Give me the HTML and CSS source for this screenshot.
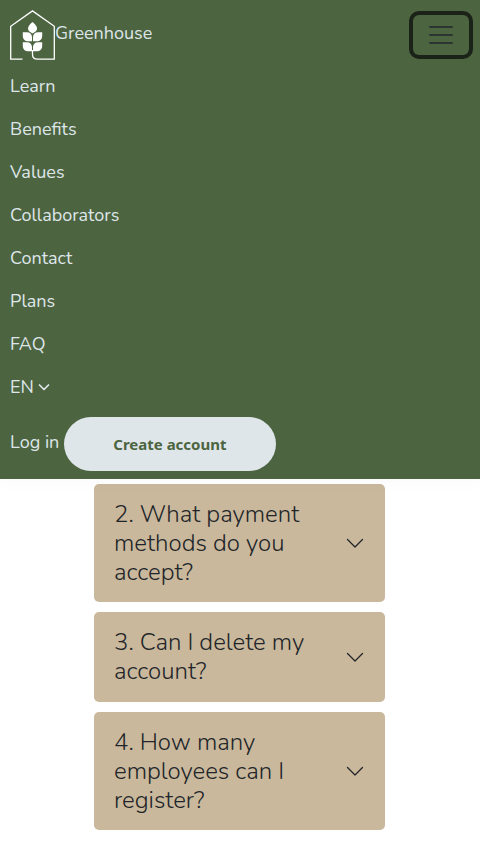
FILE: index.html
```html
<!DOCTYPE html>
<html lang="en">
<head>
  <meta charset="utf-8">
  <meta name="viewport" content="width=device-width, initial-scale=1">
  <title>Greenhouse</title>
  <link rel="stylesheet" href="styles.css">
</head>
<body>
  <header class="navbar">
    <div class="navbar-top">
      <a class="brand" href="#">
        <svg class="logo" viewBox="0 0 45 50" aria-hidden="true">
          <path class="logo-line" d="M12.500 49.200H.7V16.300L22.500.9l21.800 15.400v32.900H27.500c-3 0-5-2-5-5V40"/>
          <path class="logo-leaf" d="M22.500 12c3 2.500 4.500 4.500 4.500 6.500s-1.500 3.500-4.500 5c-3-1.500-4.500-3-4.500-5s1.500-4 4.500-6.500z"/>
          <path class="logo-leaf" d="M12.800 22.200h4c3.500 0 5.200 2 5.200 5v4h-3.500c-3.700 0-5.700-2-5.700-5.500zM32.200 22.200h-4c-3.500 0-5.200 2-5.200 5v4h3.500c3.700 0 5.700-2 5.700-5.500z"/>
          <path class="logo-leaf" d="M12.800 32.200h4c3.500 0 5.200 2 5.200 5v4h-3.500c-3.700 0-5.700-2-5.700-5.500zM32.200 32.200h-4c-3.500 0-5.200 2-5.200 5v4h3.500c3.700 0 5.700-2 5.700-5.500z"/>
        </svg>
        <span>Greenhouse</span>
      </a>
      <button class="toggler" type="button" aria-label="Toggle navigation" aria-expanded="true">
        <svg viewBox="0 0 30 30" aria-hidden="true"><path d="M4 7h22M4 15h22M4 23h22"/></svg>
      </button>
    </div>
    <nav class="menu">
      <a href="#">Learn</a>
      <a href="#">Benefits</a>
      <a href="#">Values</a>
      <a href="#">Collaborators</a>
      <a href="#">Contact</a>
      <a href="#">Plans</a>
      <a href="#">FAQ</a>
      <button class="language" type="button">EN
        <svg viewBox="0 0 12 10" aria-hidden="true"><path d="m1.500 2 4.500 4.500L10.500 2"/></svg>
      </button>
    </nav>
    <div class="account">
      <a class="login" href="#">Log in</a>
      <a class="signup" href="#">Create account</a>
    </div>
  </header>
  <main class="faq">
    <h2><button class="question" type="button"><span>2. What payment methods do you accept?</span>
      <svg viewBox="0 0 20 20" aria-hidden="true"><path d="m2.500 6.500 7.500 7.500 7.500-7.500"/></svg></button></h2>
    <h2><button class="question" type="button"><span>3. Can I delete my account?</span>
      <svg viewBox="0 0 20 20" aria-hidden="true"><path d="m2.500 6.500 7.500 7.500 7.500-7.500"/></svg></button></h2>
    <h2><button class="question" type="button"><span>4. How many employees can I register?</span>
      <svg viewBox="0 0 20 20" aria-hidden="true"><path d="m2.500 6.500 7.500 7.500 7.500-7.500"/></svg></button></h2>
  </main>
</body>
</html>
```
FILE: styles.css
```css
* {
  box-sizing: border-box;
}

body {
  margin: 0;
  background: #fff;
  color: #212529;
  font-family: Nunito, Lato, sans-serif;
  font-size: 18px;
  line-height: 27px;
}

a {
  color: inherit;
  text-decoration: none;
}

button {
  border: 0;
  background: none;
  color: inherit;
  font: inherit;
  cursor: pointer;
}

svg {
  fill: none;
}

.navbar {
  position: relative;
  padding: 10px 10px 8px;
  background: #4c6440;
  color: #dfe6ea;
  box-shadow: 0 0 20px rgba(0, 0, 0, 0.03);
}

.navbar-top {
  display: flex;
  align-items: center;
  justify-content: space-between;
  height: 50px;
}

.brand {
  display: flex;
}

.brand span {
  padding-top: 10px;
}

.logo {
  width: 45px;
  height: 50px;
}

.logo-line {
  stroke: #fff;
  stroke-width: 1.3;
}

.logo-leaf {
  fill: #fff;
}

.toggler {
  display: flex;
  margin-right: 1px;
  padding: 5px 13px;
  border-radius: 6px;
  box-shadow: 0 0 0 4px #1b2217;
}

.toggler svg {
  width: 30px;
  height: 30px;
  stroke: #2b3630;
  stroke-width: 2;
  stroke-linecap: round;
}

.menu {
  display: flex;
  flex-direction: column;
  align-items: flex-start;
  padding-top: 5px;
}

.menu a,
.language {
  padding: 8px 0;
}

.language svg {
  width: 12px;
  height: 10px;
  stroke: currentColor;
  stroke-width: 1.7;
  stroke-linecap: round;
  stroke-linejoin: round;
}

.account {
  display: flex;
  align-items: center;
  gap: 5px;
  padding-top: 8px;
}

.login {
  padding-bottom: 4px;
}

.signup {
  padding: 15px 49px;
  border-radius: 27px;
  background: #dfe6ea;
  color: #4c6440;
  font-family: "Noto Sans", sans-serif;
  font-size: 15px;
  font-weight: 700;
  line-height: 24px;
}

.faq {
  display: grid;
  gap: 10px;
  padding: 5px 95px 18px 94px;
}

h2 {
  margin: 0;
  font-size: 24px;
  font-weight: 300;
  line-height: 1.2;
}

.question {
  display: flex;
  align-items: center;
  justify-content: space-between;
  gap: 20px;
  width: 100%;
  padding: 16px 20px;
  border-radius: 5px;
  background: #cab89c;
  text-align: left;
}

.question svg {
  flex: none;
  width: 20px;
  height: 20px;
  stroke: #212529;
  stroke-width: 1.3;
  stroke-linecap: round;
  stroke-linejoin: round;
}
```
